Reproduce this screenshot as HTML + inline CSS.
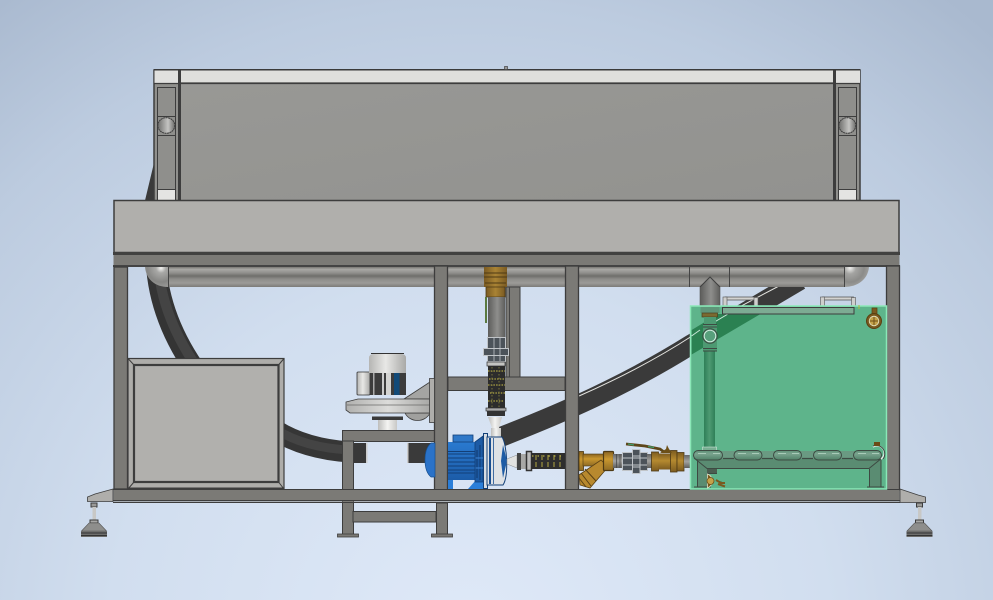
<!DOCTYPE html>
<html lang="en">
<head>
<meta charset="utf-8">
<title>Assembly view</title>
<style>
html,body{margin:0;padding:0;width:993px;height:600px;overflow:hidden;background:#c8d5e8}
svg{display:block}
</style>
</head>
<body>
<svg width="993" height="600" viewBox="0 0 993 600" xmlns="http://www.w3.org/2000/svg">
<defs>
<radialGradient id="bg" gradientUnits="userSpaceOnUse" cx="470" cy="640" r="800">
<stop offset="0" stop-color="#dfe9f8"/><stop offset=".45" stop-color="#d1deef"/><stop offset=".8" stop-color="#bccbdf"/><stop offset="1" stop-color="#a9b9cf"/>
</radialGradient>
<linearGradient id="panel" x1="0" y1="0" x2="1" y2="1"><stop offset="0" stop-color="#989895"/><stop offset="1" stop-color="#92928f"/></linearGradient>
<linearGradient id="pipe" x1="0" y1="0" x2="0" y2="1">
<stop offset="0" stop-color="#777672"/><stop offset=".12" stop-color="#a9a8a5"/><stop offset=".3" stop-color="#8f8e8b"/><stop offset=".45" stop-color="#6f6e6b"/><stop offset=".6" stop-color="#8d8c89"/><stop offset=".8" stop-color="#9c9b98"/><stop offset="1" stop-color="#7c7b78"/>
</linearGradient>
<radialGradient id="elbL" gradientUnits="userSpaceOnUse" cx="161" cy="268" r="20">
<stop offset="0" stop-color="#f4f4f2"/><stop offset=".25" stop-color="#a8a8a6"/><stop offset=".7" stop-color="#868684"/><stop offset="1" stop-color="#9b9b99"/>
</radialGradient>
<radialGradient id="elbR" gradientUnits="userSpaceOnUse" cx="850" cy="268" r="20">
<stop offset="0" stop-color="#f0f0ee"/><stop offset=".3" stop-color="#a4a4a2"/><stop offset=".7" stop-color="#8b8b89"/><stop offset="1" stop-color="#a2a2a0"/>
</radialGradient>
<linearGradient id="vp" x1="0" y1="0" x2="1" y2="0">
<stop offset="0" stop-color="#5c5c5a"/><stop offset=".55" stop-color="#8e8e8c"/><stop offset="1" stop-color="#5e5e5c"/>
</linearGradient>
<linearGradient id="hp" x1="0" y1="0" x2="0" y2="1">
<stop offset="0" stop-color="#666"/><stop offset=".5" stop-color="#a2a2a0"/><stop offset="1" stop-color="#5e5e5c"/>
</linearGradient>
<linearGradient id="cyl" x1="0" y1="0" x2="1" y2="0">
<stop offset="0" stop-color="#6d6d6b"/><stop offset=".6" stop-color="#c4c4c2"/><stop offset="1" stop-color="#6d6d6b"/>
</linearGradient>
<linearGradient id="wcyl" x1="0" y1="0" x2="1" y2="0">
<stop offset="0" stop-color="#bdbdbb"/><stop offset=".5" stop-color="#f4f4f2"/><stop offset="1" stop-color="#c8c8c6"/>
</linearGradient>
<linearGradient id="capg" x1="0" y1="0" x2="1" y2="0">
<stop offset="0" stop-color="#b5b5b3"/><stop offset=".45" stop-color="#e8e8e6"/><stop offset="1" stop-color="#a9a9a7"/>
</linearGradient>
<linearGradient id="vol" x1="0" y1="0" x2="1" y2="0">
<stop offset="0" stop-color="#b0b0ae"/><stop offset=".5" stop-color="#dcdcda"/><stop offset="1" stop-color="#a8a8a6"/>
</linearGradient>
<linearGradient id="brass" x1="0" y1="0" x2="0" y2="1">
<stop offset="0" stop-color="#8a6522"/><stop offset=".4" stop-color="#c9972f"/><stop offset="1" stop-color="#8f6b24"/>
</linearGradient>
<linearGradient id="brass2" x1="0" y1="0" x2="0" y2="1">
<stop offset="0" stop-color="#7d5c20"/><stop offset=".45" stop-color="#b58a30"/><stop offset="1" stop-color="#7d5c20"/>
</linearGradient>
<linearGradient id="brassv" x1="0" y1="0" x2="1" y2="0">
<stop offset="0" stop-color="#7a5a22"/><stop offset=".5" stop-color="#a98334"/><stop offset="1" stop-color="#7a5a22"/>
</linearGradient>
<linearGradient id="blue" x1="0" y1="0" x2="0" y2="1">
<stop offset="0" stop-color="#2a7ad0"/><stop offset="1" stop-color="#1c5ca8"/>
</linearGradient>
<linearGradient id="gp" x1="0" y1="0" x2="1" y2="0">
<stop offset="0" stop-color="#2f7f58"/><stop offset=".5" stop-color="#4d9a72"/><stop offset="1" stop-color="#2f7f58"/>
</linearGradient>
<linearGradient id="lobe" x1="0" y1="0" x2="0" y2="1">
<stop offset="0" stop-color="#5f9078"/><stop offset=".35" stop-color="#7aa48e"/><stop offset="1" stop-color="#4f8168"/>
</linearGradient>
<g id="foot">
<rect x="-3" y="0" width="6" height="4" fill="#9a9a98" stroke="#3c3c3c"/>
<rect x="-1.500" y="4" width="3.500" height="13" fill="#c8c8c6"/>
<rect x="-4" y="17" width="8" height="3" fill="#a8a8a6" stroke="#3c3c3c"/>
<path d="M-5 20H5L12.500 28H-12.500Z" fill="#8e8e8c" stroke="#555" stroke-width=".6"/>
<rect x="-13" y="28" width="26" height="6" fill="#6e6e6c"/>
<path d="M-13 30H13M-13 32.500H13" stroke="#333"/>
</g>
<g id="tophandle">
<rect x="2" y="0" width="31" height="3" fill="#d2d2d0" stroke="#4a4a4a" stroke-width=".7"/>
<rect x="0" y="0" width="4" height="9" fill="#cfcfcd" stroke="#555" stroke-width=".6"/>
<rect x="31" y="0.500" width="4" height="8.500" fill="#cfcfcd" stroke="#555" stroke-width=".6"/>
</g>
</defs>

<rect width="993" height="600" fill="url(#bg)"/>

<!-- back hoses -->
<path d="M153.500 165L145 200.500H153.500Z" fill="#3a3a3a"/>
<path d="M156 262Q159 320 199 375" fill="none" stroke="#343434" stroke-width="20.500"/>
<path d="M158 262Q161 318 201 373" fill="none" stroke="#444" stroke-width="10"/>
<path d="M275 430Q305 449 350 452" fill="none" stroke="#363636" stroke-width="21"/>
<path d="M275 429Q305 448 350 450" fill="none" stroke="#444" stroke-width="9"/>
<rect x="353" y="443" width="14" height="20" fill="#383838"/><rect x="366" y="443" width="1.500" height="20" fill="#ccc"/>
<rect x="408" y="443" width="28" height="20" fill="#3a3a3a"/><rect x="407" y="443" width="1.500" height="20" fill="#ccc"/>

<!-- upper panel -->
<rect x="154" y="70" width="706" height="131" fill="#90908d" stroke="#3d3d3d" stroke-width="1.500"/>
<rect x="181" y="84" width="653" height="117" fill="url(#panel)"/>
<rect x="154.500" y="70" width="24" height="13.500" fill="#e0e0de"/>
<rect x="181" y="70" width="652" height="13" fill="#dfdfdc"/>
<rect x="836" y="70" width="24" height="13.500" fill="#e0e0de"/>
<path d="M154 83.500H860M181 83H833" stroke="#3d3d3d" stroke-width="1.200"/>
<rect x="178" y="70" width="3" height="131" fill="#3d3d3d"/>
<rect x="833" y="70" width="3" height="131" fill="#3d3d3d"/>
<rect x="154" y="69" width="706" height="1.500" fill="#3a3a3a"/>
<rect x="504.500" y="66.500" width="3" height="3" fill="#999" stroke="#444" stroke-width=".7"/>
<!-- left col -->
<rect x="157.500" y="87.500" width="18" height="113" fill="#8f8f8c" stroke="#3d3d3d"/>
<rect x="158" y="189.500" width="17" height="11" fill="#e4e4e2"/>
<path d="M157.500 189.500H175.500M157.500 116.500H175.500M157.500 135.500H175.500" stroke="#3d3d3d"/>
<ellipse cx="166.300" cy="125.500" rx="8.500" ry="7.800" fill="url(#cyl)" stroke="#3d3d3d" stroke-dasharray="2 .5"/>
<!-- right col -->
<rect x="838.500" y="87.500" width="18" height="113" fill="#8f8f8c" stroke="#3d3d3d"/>
<rect x="839" y="189.500" width="17" height="11" fill="#e4e4e2"/>
<path d="M838.500 189.500H856.500M838.500 116.500H856.500M838.500 135.500H856.500" stroke="#3d3d3d"/>
<ellipse cx="847.300" cy="125.500" rx="8.500" ry="7.800" fill="url(#cyl)" stroke="#3d3d3d" stroke-dasharray="2 .5"/>

<!-- slab -->
<rect x="114" y="200.500" width="785" height="52" fill="#b0afac" stroke="#3d3d3d" stroke-width="1.500"/>
<rect x="113" y="252" width="787" height="3" fill="#414140"/>
<rect x="113.500" y="255" width="786" height="10" fill="#7b7a76"/>
<rect x="113" y="265" width="787" height="2" fill="#444"/>

<!-- front hose right (behind big pipe) -->
<path d="M498 438C560 414 625 386 692 344L800 280" fill="none" stroke="#3a3a3a" stroke-width="20"/>
<path d="M579 396C620 378 655 360 692 336L743 305L779 286" fill="none" stroke="#e4e4e0" stroke-width="1"/>

<!-- big pipe -->
<rect x="168" y="267" width="677" height="20" fill="url(#pipe)"/>
<path d="M145 267H168V287C155 287 146 279 145 267Z" fill="url(#elbL)"/>
<path d="M844 267H869C868 279 858 287 844 287Z" fill="url(#elbR)"/>
<path d="M168.500 267V287M689.500 267V287M729.500 267V287M844.500 267V287" stroke="#444" stroke-width="1"/>

<!-- back vertical + cross beam -->
<rect x="506" y="287" width="14" height="90" fill="#7b7a76" stroke="#3d3d3d"/>
<rect x="509" y="287" width="1" height="90" fill="#444"/>
<rect x="448" y="377" width="117" height="13.500" fill="#7b7a76" stroke="#3d3d3d"/>

<!-- box -->
<rect x="128" y="358.500" width="156" height="131" fill="#aeadaa" stroke="#3d3d3d" stroke-width="1.200"/>
<rect x="134" y="365" width="144.500" height="117" fill="#b1b0ad" stroke="#3d3d3d" stroke-width="2.200"/>
<path d="M128 358.500L134 365M284 358.500L278.500 365M128 489L134 482M284 489L278.500 482" stroke="#3d3d3d"/>
<rect x="128" y="487.500" width="156" height="2" fill="#3d3d3d"/>

<!-- table + lower legs -->
<rect x="342.500" y="430.500" width="92" height="11" fill="#7b7a76" stroke="#3d3d3d"/>
<rect x="342.500" y="441" width="11" height="95" fill="#7b7a76" stroke="#3d3d3d"/>
<rect x="436.500" y="503" width="11" height="33" fill="#7b7a76" stroke="#3d3d3d"/>
<rect x="353" y="511.500" width="83" height="10.500" fill="#7b7a76" stroke="#3d3d3d"/>
<rect x="337.500" y="534" width="21" height="3" fill="#7b7a76" stroke="#3d3d3d" stroke-width=".8"/>
<rect x="431.500" y="534" width="21" height="3" fill="#7b7a76" stroke="#3d3d3d" stroke-width=".8"/>

<!-- frame -->
<rect x="114" y="267" width="13.500" height="222" fill="#7b7a76" stroke="#3d3d3d" stroke-width="1.300"/>
<rect x="434.500" y="266" width="13" height="224" fill="#7b7a76" stroke="#3d3d3d" stroke-width="1.300"/>
<rect x="565.500" y="266" width="13" height="224" fill="#7b7a76" stroke="#3d3d3d" stroke-width="1.300"/>
<rect x="886.500" y="266" width="13" height="224" fill="#7b7a76" stroke="#3d3d3d" stroke-width="1.300"/>
<rect x="113.500" y="489.500" width="786" height="12" fill="#7b7a76"/>
<path d="M113 489.500H900" stroke="#3d3d3d"/>
<path d="M113 500.500H900" stroke="#3d3d3d"/><path d="M113 502.500H900" stroke="#3d3d3d"/>

<!-- feet -->
<path d="M87.500 497V501.500 H113V489L95 494Z" fill="#afaeab" stroke="#3d3d3d" stroke-width=".8"/>
<use href="#foot" x="94" y="503"/>
<path d="M900 489L918 495 925.500 497V502.500H900Z" fill="#afaeab" stroke="#3d3d3d" stroke-width=".8"/>
<use href="#foot" x="919.500" y="503"/>

<!-- blower -->
<rect x="357" y="372" width="13" height="23" rx="1" fill="url(#capg)" stroke="#333" stroke-width=".8"/>
<path d="M369 373V358Q369 354 374 354H401Q406 354 406 358V373Z" fill="url(#capg)"/>
<path d="M371 353.500H404" stroke="#333"/>
<rect x="370" y="373" width="36" height="22" fill="#3c3c3c"/>
<rect x="373" y="373" width="1.500" height="22" fill="#aaa"/>
<rect x="382" y="373" width="2" height="22" fill="#ccc"/><rect x="386" y="373" width="5" height="22" fill="#d4d4d2"/><rect x="394" y="373" width="5.500" height="22" fill="#124a78"/>
<path d="M404 399L430 382V399Z" fill="#a5a5a3" stroke="#3d3d3d" stroke-width=".8"/>
<path d="M405 413C410 423 425 423 430 413Z" fill="#a0a09e" stroke="#3d3d3d" stroke-width=".8"/>
<path d="M346 402L358 399H430V413H350L346 410Z" fill="url(#vol)" stroke="#3d3d3d" stroke-width=".8"/>
<path d="M347 405H430" stroke="#6a6a68" stroke-width=".7"/>
<rect x="429.500" y="378.500" width="5" height="44" fill="#afaeab" stroke="#3d3d3d" stroke-width=".8"/>
<rect x="372" y="416.500" width="31" height="3.500" fill="#3a3a3a"/>
<rect x="378" y="420" width="19" height="10" fill="url(#wcyl)"/>

<!-- vertical pipe assembly -->
<rect x="484" y="267" width="23" height="20" fill="url(#brassv)"/>
<path d="M484 273H507M484 277H507M485 283H506" stroke="#4e3a14"/>
<rect x="486" y="287" width="19" height="10" fill="url(#brassv)" stroke="#4e3a14" stroke-width=".8"/>
<rect x="485" y="297" width="2" height="26" fill="#5a7a40"/>
<rect x="488" y="297" width="17" height="40" fill="url(#vp)"/>
<rect x="487.500" y="337.500" width="18" height="24" fill="#4c535a" stroke="#c0c4c8"/>
<rect x="483.500" y="348.500" width="25" height="7" fill="#4c535a" stroke="#c0c4c8"/>
<path d="M494 338V361M500 338V361" stroke="#c0c4c8" stroke-width=".8"/>
<rect x="487" y="362" width="18" height="4" fill="#c4c4c2" stroke="#333" stroke-width=".7"/>
<rect x="488" y="366" width="17" height="42" fill="#2c2c2c"/>
<path d="M488 371H505M489 379H504M488 385H505M490 393H505M488 401H504" stroke="#cfc34a" stroke-width="1" stroke-dasharray="1.500 1.200"/>
<path d="M492 367V408M499 367V408" stroke="#8d8640" stroke-width=".8" stroke-dasharray="1.500 2"/>
<rect x="486" y="408" width="20" height="3" fill="#aaa" stroke="#333" stroke-width=".7"/>
<rect x="487" y="411" width="18" height="5" fill="#333"/>
<path d="M488 417H502L499 428H492Z" fill="url(#wcyl)"/>
<rect x="491" y="428" width="10" height="10" fill="url(#wcyl)"/>

<!-- pump -->
<path d="M435 443H431Q425 448 425 460Q425 472 431 477H435Z" fill="#2a72c8" stroke="#17508f" stroke-width=".7"/>
<rect x="448" y="442" width="27" height="38" fill="url(#blue)"/>
<rect x="453" y="435" width="20" height="7" fill="#2f78c8" stroke="#123f78" stroke-width=".8"/>
<path d="M448 451.500H475M448 454H475M448 458H475M448 462H475M448 466H475M448 470H475M448 473H475" stroke="#123f78" stroke-width="1"/>
<rect x="448" y="480" width="5" height="9" fill="#2a7ed8"/>
<path d="M468 489L476 480H483V489Z" fill="#2a7ed8"/>
<path d="M475 442L483 436V482H475Z" fill="#1d5ba5" stroke="#123f78" stroke-width=".8"/>
<path d="M477 450V478M480 445V480" stroke="#0f3a70"/>
<path d="M475.500 458H483M475.500 468H483" stroke="#3e86d6"/>
<rect x="483.500" y="433.500" width="4" height="55" fill="#d8dde2" stroke="#123f78"/>
<path d="M487 437H502C507 444 509 476 503 485H487Z" fill="#dfe2e5" stroke="#123f78"/>
<path d="M490 438V484" stroke="#1a4f90" stroke-width="2"/>
<path d="M493.500 438V484" stroke="#1a4f90" stroke-width=".8"/>
<path d="M503 445L507 461L503 478L501 461Z" fill="#1d5ba5"/>
<!-- suction line -->
<path d="M507 459L517 455V468L507 464Z" fill="#e2e2e0" stroke="#888" stroke-width=".5"/>
<rect x="517" y="453" width="4" height="17" fill="#444"/>
<rect x="521" y="454" width="5" height="15" fill="#a8a8a6"/>
<rect x="526.500" y="451.500" width="5" height="19" fill="#bbb" stroke="#333" stroke-width="1.500"/>
<rect x="531" y="453" width="34" height="16" fill="#2e2e2e"/>
<path d="M532 456H565" stroke="#d4c94c" stroke-dasharray="1.500 4"/>
<path d="M536 455V468M542 455V468M548 455V468M554 455V468M560 455V468" stroke="#c0b545" stroke-width=".9" stroke-dasharray="5 2"/>

<!-- strainer -->
<rect x="579" y="451.500" width="4.500" height="19" fill="url(#brass)" stroke="#4e3a14" stroke-width=".8"/>
<rect x="583" y="454" width="21" height="12" fill="url(#brass)" stroke="#4e3a14" stroke-width=".6"/>
<path d="M601 460L608 467L590 488L580 485L579 475Z" fill="#b8892e" stroke="#5a4115" stroke-width=".8"/>
<path d="M581 473L591 486M579 478L586 487M585 469L596 481" stroke="#5a4115"/>
<rect x="603.500" y="451.500" width="10" height="19" rx="1" fill="url(#brass)" stroke="#4e3a14" stroke-width="1.200"/>
<rect x="613" y="454" width="9" height="14" fill="url(#hp)"/>
<path d="M616.500 454V468M620 454V468" stroke="#444" stroke-width=".7"/>
<!-- union -->
<rect x="622.500" y="452.500" width="25" height="18" fill="#4c535a" stroke="#c0c4c8"/>
<rect x="632.500" y="449.500" width="7.500" height="24" fill="#4c535a" stroke="#c0c4c8"/>
<path d="M623 458H647M623 465H647M632 456H640M632 467H640" stroke="#c0c4c8" stroke-width=".9"/>
<rect x="647" y="454" width="5" height="14" fill="url(#hp)"/>
<rect x="651.500" y="452" width="7" height="19" fill="url(#brass2)" stroke="#4e3a14" stroke-width=".8"/>
<rect x="658" y="453.500" width="13" height="16" fill="url(#brass2)"/>
<rect x="670.500" y="450.500" width="6.500" height="21.500" fill="url(#brass2)" stroke="#4e3a14" stroke-width=".8"/>
<rect x="677" y="452.500" width="7" height="18.500" fill="url(#brass2)" stroke="#4e3a14" stroke-width=".8"/>
<rect x="684" y="455" width="6" height="13" fill="url(#hp)"/>
<path d="M626 444L645 446 660 449 664 452" fill="none" stroke="#5d461a" stroke-width="2.800"/>
<path d="M628 444L634 445M648 446.500L654 447.500" fill="none" stroke="#3f9c6b" stroke-width="1.200"/>
<path d="M660 453L666 449 667 445 669 449 672 453Z" fill="#6d5018"/>

<!-- cone pipe -->
<path d="M700 287L710 277L720 287V318H700Z" fill="url(#vp)"/>
<path d="M700 287L710 277L720 287" fill="none" stroke="#3f3f3f"/>
<path d="M700 287V306M720 287V306" stroke="#555" stroke-width=".6"/>

<!-- handles -->
<use href="#tophandle" x="723" y="297"/>
<use href="#tophandle" x="820.500" y="297"/>

<!-- green glass -->
<rect x="690.500" y="306.500" width="196" height="182.500" fill="#5eb48b"/>
<rect x="690.500" y="306" width="196" height="183" fill="none" stroke="#8be8b8" stroke-width="1.500"/>
<path d="M691.700 330L718 314H760.500L691.700 354.500Z" fill="#2b8152"/>
<path d="M691.500 336L700 330M715 321.700L728 314" fill="none" stroke="#c7e8d8" stroke-width="1"/>
<rect x="700.500" y="307" width="19" height="6" fill="#5f9579"/>
<rect x="702" y="313" width="15.500" height="4" fill="#7a6a30" stroke="#4a3f20" stroke-width=".7"/>
<rect x="722.500" y="307.500" width="131.500" height="6.500" fill="#7dab93" stroke="#3d3d3d"/>

<!-- tee -->
<rect x="704" y="351" width="11" height="96" fill="url(#gp)"/>
<rect x="704" y="317" width="12" height="8" fill="#4d9a72"/>
<rect x="703" y="324" width="14" height="27" fill="#4d9a72"/>
<path d="M703 324.500H717M703 327H717M703 348.500H717M703 351H717" stroke="#3d4a42"/>
<circle cx="710" cy="336" r="5.800" fill="#58a07c" stroke="#d3ebe0" stroke-width="1"/>
<circle cx="710" cy="336" r="7.200" fill="none" stroke="#3d4a42" stroke-width="1"/>
<rect x="702.500" y="447" width="14" height="3.500" fill="#79ae92" stroke="#dfeee6" stroke-width=".5"/>

<!-- manifold -->
<path d="M694 458L698 460V487H707V468.500H869V487H881V460L884 458Z" fill="#5a8c72"/>
<path d="M694 458L707 468.500H869L882 458" fill="none" stroke="#3d4a42"/>
<path d="M697.500 460V487M707.500 469V487M694 487H711M869.500 469V487M881 460V487M867 487H884" stroke="#3d4a42"/>
<rect x="720" y="451" width="136" height="7.500" fill="#6a9a82"/>
<path d="M723 458.500H734M762 458.500H773M802 458.500H813M842 458.500H853" stroke="#3d4a42" stroke-width="1.200"/>
<rect x="693.500" y="450.500" width="29" height="9.500" rx="4.700" fill="url(#lobe)" stroke="#3d4a42"/>
<rect x="734" y="450.500" width="28" height="9.500" rx="4.700" fill="url(#lobe)" stroke="#3d4a42"/>
<rect x="773.500" y="450.500" width="28" height="9.500" rx="4.700" fill="url(#lobe)" stroke="#3d4a42"/>
<rect x="813.500" y="450.500" width="28" height="9.500" rx="4.700" fill="url(#lobe)" stroke="#3d4a42"/>
<rect x="853.500" y="450.500" width="28" height="9.500" rx="4.700" fill="url(#lobe)" stroke="#3d4a42"/>
<path d="M698 453.500H706M713 453.500H720M738 453.500H746M752 453.500H759M778 453.500H786M792 453.500H799M818 453.500H826M832 453.500H839M858 453.500H866M872 453.500H879" stroke="#a8cbb8" stroke-width="1"/>
<path d="M873 447A7 7 0 0 1 881 459" fill="none" stroke="#e4efe9" stroke-width="1.500"/>
<path d="M873 446A8.500 8.500 0 0 1 883 459" fill="none" stroke="#3d4a42" stroke-width="1"/>
<rect x="874" y="442" width="6" height="4" fill="#6b4a16"/>

<!-- valves -->
<rect x="872" y="308" width="5" height="6" fill="#7a5a1f" stroke="#5a3f12" stroke-width=".7"/>
<circle cx="874" cy="321" r="7.500" fill="#7a5a1f" stroke="#5a3f12"/>
<circle cx="874" cy="321" r="4.800" fill="#c5a24a" stroke="#e3e3c8" stroke-width=".8"/>
<path d="M870 321H878M874 317V325" stroke="#6d4e16"/>
<rect x="707" y="469" width="10" height="4" fill="#4a5d50"/>
<path d="M708 473.500H717" stroke="#3d4a42"/>
<path d="M707.500 474A7.500 7.500 0 0 1 707.500 488Z" fill="#7a5a1f" stroke="#e3e3c8" stroke-width=".8"/>
<circle cx="710.500" cy="481" r="3.500" fill="#c5a24a" stroke="#6d4e16" stroke-width=".8"/>
<path d="M716 480L721 483L725 483M718 484L725 486.500" stroke="#7a5a1f" stroke-width="2"/>
<path d="M859 305V309" stroke="#b4b83c"/>
</svg>
</body>
</html>
